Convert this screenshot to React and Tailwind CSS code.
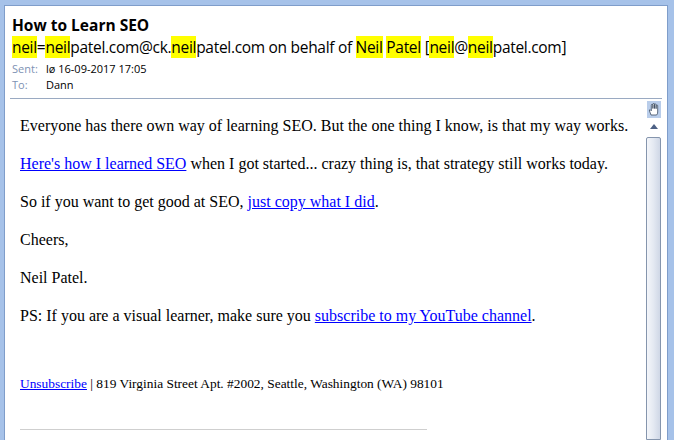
import React from "react";

const Hl = ({ children }) => <span className="bg-[#ffff00]">{children}</span>;

const ScrollBar = () => (
  <div className="w-[17px] flex flex-col items-center pt-[2px] mr-[5px]">
    <div className="w-[14px] h-[17px] bg-[#b9cdea] flex items-center justify-center">
      <svg width="12" height="13" viewBox="0 0 12 13">
        <path
          d="M3 12 L1.5 8 Q1 6.5 2.3 6.8 L3.3 7.8 L3.3 2.2 Q3.3 1.3 4.1 1.3 Q4.9 1.3 4.9 2.2 L4.9 5.5 L4.9 1.3 Q4.9 0.4 5.7 0.4 Q6.5 0.4 6.5 1.3 L6.5 5.5 L6.5 1.8 Q6.5 1 7.3 1 Q8.1 1 8.1 1.8 L8.1 5.7 L8.1 2.8 Q8.1 2 8.9 2 Q9.7 2 9.7 2.8 L9.7 9 Q9.7 11 8.6 12 Z"
          fill="#ffffff"
          stroke="#3a4a60"
          strokeWidth="0.8"
        />
      </svg>
    </div>
    <div className="h-[17px] flex items-center justify-center">
      <svg width="8" height="5" viewBox="0 0 8 5">
        <path d="M0 5 L4 0 L8 5 Z" fill="#4d6185" />
      </svg>
    </div>
    <div className="mt-[2px] w-[15px] flex-1 rounded-t-[2px] border border-[#8595ad] bg-gradient-to-r from-[#f4f6fa] via-[#e4e9f2] to-[#cfd7e6]" />
  </div>
);

export default function App() {
  return (
    <div className="w-[674px] h-[440px] overflow-hidden bg-[#a6c2e9] pt-[5px] pl-[4px] pr-[6px]">
      <div className="h-full bg-white border-l border-t border-r border-[#7f9dca] flex flex-col">
        <div className="px-[7px] pt-[9px] pb-[5px] font-['Open_Sans','Noto_Sans',sans-serif] text-black">
          <div className="text-[15.5px] font-bold leading-[20px]">How to Learn SEO</div>
          <div className="text-[15.5px] leading-[22px] mt-[1px] tracking-[-0.3px]">
            <Hl>neil</Hl>=<Hl>neil</Hl>patel.com@ck.<Hl>neil</Hl>patel.com on behalf of <Hl>Neil</Hl>{" "}
            <Hl>Patel</Hl> [<Hl>neil</Hl>@<Hl>neil</Hl>patel.com]
          </div>
          <div className="flex text-[11px] leading-[17px] mt-[2px]">
            <span className="w-[34px] text-[#7e92b4]">Sent:</span>
            <span>lø 16-09-2017 17:05</span>
          </div>
          <div className="flex text-[11px] leading-[16px]">
            <span className="w-[34px] text-[#7e92b4]">To:</span>
            <span>Dann</span>
          </div>
        </div>
        <div className="mx-[5px] border-t border-[#9aaac2]" />
        <div className="flex-1 flex min-h-0">
          <div className="flex-1 pl-[15px] pt-[18px] font-['Liberation_Serif','Times_New_Roman',serif] text-[16px] leading-[18px] text-black">
            <p className="mb-[20px]">
              Everyone has there own way of learning SEO. But the one thing I know, is that my way works.
            </p>
            <p className="mb-[20px]">
              <a className="text-[#0000ff] underline">Here's how I learned SEO</a> when I got started... crazy thing is, that strategy still works today.
            </p>
            <p className="mb-[20px]">
              So if you want to get good at SEO, <a className="text-[#0000ff] underline">just copy what I did</a>.
            </p>
            <p className="mb-[20px]">Cheers,</p>
            <p className="mb-[20px]">Neil Patel.</p>
            <p className="mb-[20px]">
              PS: If you are a visual learner, make sure you{" "}
              <a className="text-[#0000ff] underline">subscribe to my YouTube channel</a>.
            </p>
            <p className="mt-[51px] text-[13.4px] leading-[16px]">
              <a className="text-[#0000ff] underline">Unsubscribe</a> | 819 Virginia Street Apt. #2002, Seattle, Washington (WA) 98101
            </p>
            <div className="mt-[37px] w-[407px] border-t border-[#cfcfcf]" />
          </div>
          <ScrollBar />
        </div>
      </div>
    </div>
  );
}
